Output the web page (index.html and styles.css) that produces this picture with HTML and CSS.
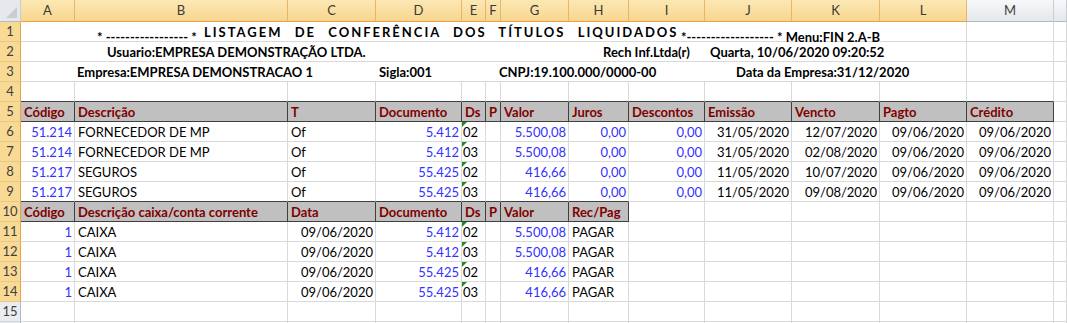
FILE: index.html
```html
<!DOCTYPE html>
<html lang="pt">
<head>
<meta charset="utf-8">
<title>Listagem de Conferência dos Títulos Liquidados</title>
<link rel="stylesheet" href="styles.css">
</head>
<body>
<div class="sheet">
  <!-- column headers -->
  <div class="corner"></div>
  <div class="ch sel">A</div><div class="ch sel">B</div><div class="ch sel">C</div><div class="ch sel">D</div>
  <div class="ch sel">E</div><div class="ch sel">F</div><div class="ch sel">G</div><div class="ch sel">H</div>
  <div class="ch sel">I</div><div class="ch sel">J</div><div class="ch sel">K</div><div class="ch sel">L</div>
  <div class="ch">M</div><div class="ch"></div>

  <!-- row 1 -->
  <div class="rh sel">1</div>
  <div class="c merged title"><span class="p t1">* ----------------- *</span><span class="p t2">LISTAGEM DE CONFERÊNCIA DOS TÍTULOS LIQUIDADOS</span><span class="p">*------------------ * Menu:FIN 2.A-B</span></div>
  <div class="c"></div><div class="c"></div>

  <!-- row 2 -->
  <div class="rh sel">2</div>
  <div class="c merged info2"><span class="p u1">Usuario:EMPRESA DEMONSTRAÇÃO LTDA.</span><span class="p u2">Rech Inf.Ltda(r)</span><span class="p">Quarta, 10/06/2020 09:20:52</span></div>
  <div class="c"></div><div class="c"></div>

  <!-- row 3 -->
  <div class="rh sel">3</div>
  <div class="c merged info3"><span class="p e1">Empresa:EMPRESA DEMONSTRACAO 1</span><span class="p e2">Sigla:001</span><span class="p e3">CNPJ:19.100.000/0000-00</span><span class="p">Data da Empresa:31/12/2020</span></div>
  <div class="c"></div><div class="c"></div>

  <!-- row 4 -->
  <div class="rh sel">4</div>
  <div class="c above"></div><div class="c above"></div><div class="c above"></div><div class="c above"></div>
  <div class="c above"></div><div class="c above"></div><div class="c above"></div><div class="c above"></div>
  <div class="c above"></div><div class="c above"></div><div class="c above"></div><div class="c above"></div>
  <div class="c above"></div><div class="c"></div>

  <!-- row 5 -->
  <div class="rh sel">5</div>
  <div class="c th">Código</div><div class="c th">Descrição</div><div class="c th">T</div><div class="c th">Documento</div>
  <div class="c th">Ds</div><div class="c th">P</div><div class="c th">Valor</div><div class="c th">Juros</div>
  <div class="c th">Descontos</div><div class="c th">Emissão</div><div class="c th">Vencto</div><div class="c th">Pagto</div>
  <div class="c th">Crédito</div><div class="c"></div>

  <!-- row 6 -->
  <div class="rh sel">6</div>
  <div class="c r b">51.214</div><div class="c">FORNECEDOR DE MP</div><div class="c">Of</div><div class="c r b">5.412</div>
  <div class="c ds">02</div><div class="c"></div><div class="c r b">5.500,08</div><div class="c r b">0,00</div>
  <div class="c r b">0,00</div><div class="c r">31/05/2020</div><div class="c r">12/07/2020</div><div class="c r">09/06/2020</div>
  <div class="c r">09/06/2020</div><div class="c"></div>

  <!-- row 7 -->
  <div class="rh sel">7</div>
  <div class="c r b">51.214</div><div class="c">FORNECEDOR DE MP</div><div class="c">Of</div><div class="c r b">5.412</div>
  <div class="c ds">03</div><div class="c"></div><div class="c r b">5.500,08</div><div class="c r b">0,00</div>
  <div class="c r b">0,00</div><div class="c r">31/05/2020</div><div class="c r">02/08/2020</div><div class="c r">09/06/2020</div>
  <div class="c r">09/06/2020</div><div class="c"></div>

  <!-- row 8 -->
  <div class="rh sel">8</div>
  <div class="c r b">51.217</div><div class="c">SEGUROS</div><div class="c">Of</div><div class="c r b">55.425</div>
  <div class="c ds">02</div><div class="c"></div><div class="c r b">416,66</div><div class="c r b">0,00</div>
  <div class="c r b">0,00</div><div class="c r">11/05/2020</div><div class="c r">10/07/2020</div><div class="c r">09/06/2020</div>
  <div class="c r">09/06/2020</div><div class="c"></div>

  <!-- row 9 -->
  <div class="rh sel">9</div>
  <div class="c r b above">51.217</div><div class="c above">SEGUROS</div><div class="c above">Of</div><div class="c r b above">55.425</div>
  <div class="c ds above">03</div><div class="c above"></div><div class="c r b above">416,66</div><div class="c r b above">0,00</div>
  <div class="c r b">0,00</div><div class="c r">11/05/2020</div><div class="c r">09/08/2020</div><div class="c r">09/06/2020</div>
  <div class="c r">09/06/2020</div><div class="c"></div>

  <!-- row 10 -->
  <div class="rh sel">10</div>
  <div class="c th">Código</div><div class="c th">Descrição caixa/conta corrente</div><div class="c th">Data</div><div class="c th">Documento</div>
  <div class="c th">Ds</div><div class="c th">P</div><div class="c th">Valor</div><div class="c th">Rec/Pag</div>
  <div class="c"></div><div class="c"></div><div class="c"></div><div class="c"></div><div class="c"></div><div class="c"></div>

  <!-- row 11 -->
  <div class="rh sel">11</div>
  <div class="c r b">1</div><div class="c">CAIXA</div><div class="c r">09/06/2020</div><div class="c r b">5.412</div>
  <div class="c ds">02</div><div class="c"></div><div class="c r b">5.500,08</div><div class="c">PAGAR</div>
  <div class="c"></div><div class="c"></div><div class="c"></div><div class="c"></div><div class="c"></div><div class="c"></div>

  <!-- row 12 -->
  <div class="rh sel">12</div>
  <div class="c r b">1</div><div class="c">CAIXA</div><div class="c r">09/06/2020</div><div class="c r b">5.412</div>
  <div class="c ds">03</div><div class="c"></div><div class="c r b">5.500,08</div><div class="c">PAGAR</div>
  <div class="c"></div><div class="c"></div><div class="c"></div><div class="c"></div><div class="c"></div><div class="c"></div>

  <!-- row 13 -->
  <div class="rh sel">13</div>
  <div class="c r b">1</div><div class="c">CAIXA</div><div class="c r">09/06/2020</div><div class="c r b">55.425</div>
  <div class="c ds">02</div><div class="c"></div><div class="c r b">416,66</div><div class="c">PAGAR</div>
  <div class="c"></div><div class="c"></div><div class="c"></div><div class="c"></div><div class="c"></div><div class="c"></div>

  <!-- row 14 -->
  <div class="rh sel">14</div>
  <div class="c r b">1</div><div class="c">CAIXA</div><div class="c r">09/06/2020</div><div class="c r b">55.425</div>
  <div class="c ds">03</div><div class="c"></div><div class="c r b">416,66</div><div class="c">PAGAR</div>
  <div class="c"></div><div class="c"></div><div class="c"></div><div class="c"></div><div class="c"></div><div class="c"></div>

  <!-- row 15 -->
  <div class="rh">15</div>
  <div class="c"></div><div class="c"></div><div class="c"></div><div class="c"></div><div class="c"></div><div class="c"></div><div class="c"></div>
  <div class="c"></div><div class="c"></div><div class="c"></div><div class="c"></div><div class="c"></div><div class="c"></div><div class="c"></div>

  <!-- row 16 (only its top edge is in view) -->
  <div class="rh"></div>
  <div class="c"></div><div class="c"></div><div class="c"></div><div class="c"></div><div class="c"></div><div class="c"></div><div class="c"></div>
  <div class="c"></div><div class="c"></div><div class="c"></div><div class="c"></div><div class="c"></div><div class="c"></div><div class="c"></div>
</div>
</body>
</html>
```
FILE: styles.css
```css
html, body {
  margin: 0;
  padding: 0;
  background: #ffffff;
  overflow: hidden;
}

.sheet {
  display: grid;
  grid-template-columns: 21px 54px 213px 88px 86px 24px 15px 68px 60px 76px 87px 88px 87px 87px 13px;
  grid-template-rows: 22px;
  grid-auto-rows: 20px;
  font-family: Lato, "Open Sans", sans-serif;
  font-size: 13px;
  color: #000;
  width: 1067px;
  height: 323px;
  overflow: hidden;
}

.corner {
  position: relative;
  background: #e6e8eb;
  border-right: 1px solid #c8ccd1;
  border-bottom: 1px solid #b7bcc3;
  box-sizing: border-box;
}
.corner::after {
  content: "";
  position: absolute;
  right: 3px;
  bottom: 3px;
  width: 0;
  height: 0;
  border-left: 11px solid transparent;
  border-bottom: 11px solid #c9cdd3;
}

.ch {
  box-sizing: border-box;
  background: linear-gradient(#f7f8fa, #e4e7eb);
  border-right: 1px solid #c9cdd2;
  border-bottom: 1px solid #b4bac2;
  color: #404040;
  text-align: center;
  line-height: 21px;
  font-size: 13px;
}
.ch.sel {
  background: linear-gradient(#fce8b4, #f8d68f);
  border-right: 1px solid #e4b76a;
  border-bottom: 1px solid #eea043;
  color: #3a3a3a;
}

.rh {
  box-sizing: border-box;
  background: #e9ecf0;
  border-right: 1px solid #b4bac2;
  border-bottom: 1px solid #d0d4d9;
  color: #404040;
  text-align: center;
  line-height: 19px;
  font-size: 13px;
}
.rh.sel {
  background: #f9da95;
  border-right: 1px solid #eea043;
  border-bottom: 1px solid #e9c787;
}

.c {
  box-sizing: border-box;
  border-right: 1px solid #d9d9d9;
  border-bottom: 1px solid #d9d9d9;
  padding: 0 2px 0 3px;
  line-height: 20px;
  white-space: nowrap;
  overflow: hidden;
}
.r { text-align: right; }
.b { color: #3232ff; }

.above { border-bottom-color: #3f3f3f; }

.th {
  background: #c0c0c0;
  color: #800000;
  font-weight: 700;
  border-right-color: #3f3f3f;
  border-bottom-color: #3f3f3f;
}

.ds {
  position: relative;
  padding-left: 1px;
}
.ds::before {
  content: "";
  position: absolute;
  left: 0;
  top: 0;
  width: 0;
  height: 0;
  border-top: 5px solid #1f8a1f;
  border-right: 5px solid transparent;
}

.merged {
  grid-column: span 12;
  font-weight: 700;
  overflow: visible;
}
.p { display: inline-block; white-space: pre; }

.title { padding-left: 76px; }
.t1 { width: 107px; }
.t2 { width: 477px; letter-spacing: 2px; word-spacing: 7px; overflow: hidden; }

.info2 { padding-left: 86px; }
.u1 { width: 496px; }
.u2 { width: 107px; }

.info3 { padding-left: 56px; }
.e1 { width: 302px; }
.e2 { width: 120px; }
.e3 { width: 237px; }
```
